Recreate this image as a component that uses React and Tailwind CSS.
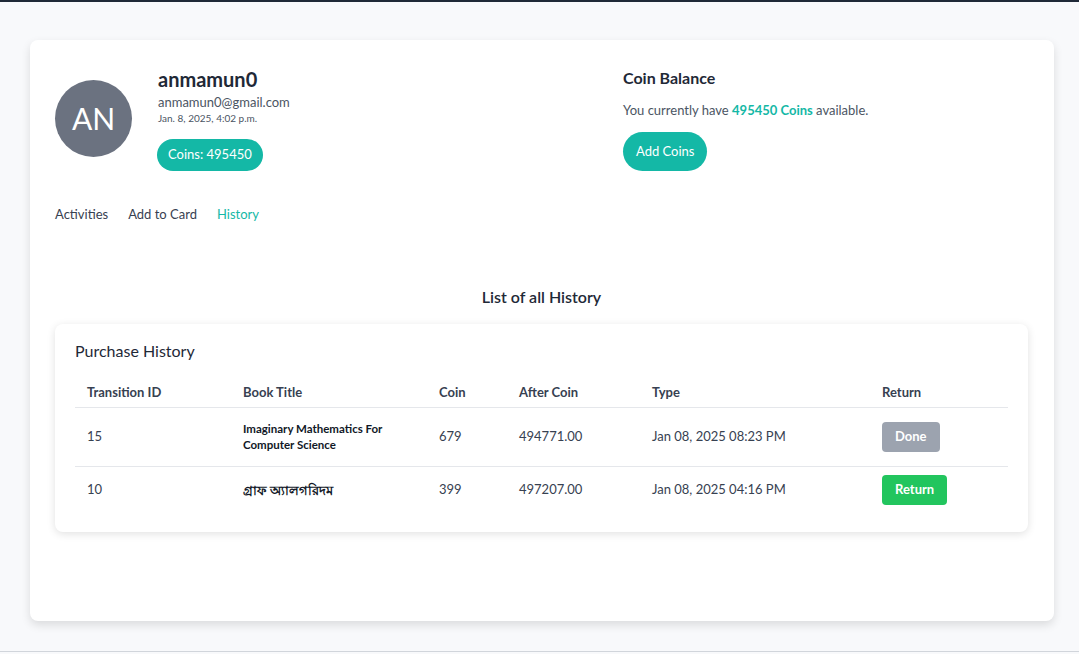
const rows = [
  {
    id: "15",
    title: "Imaginary Mathematics For Computer Science",
    coin: "679",
    after: "494771.00",
    type: "Jan 08, 2025 08:23 PM",
    done: true,
  },
  {
    id: "10",
    title: "গ্রাফ অ্যালগরিদম",
    coin: "399",
    after: "497207.00",
    type: "Jan 08, 2025 04:16 PM",
    done: false,
  },
];

const App = () => {
  return (
    <div
      className="h-[654px] bg-[#f8f9fb] border-t-2 border-[#1f2937] flex flex-col"
      style={{ fontFamily: "Lato, 'Open Sans', sans-serif" }}
    >
      <div className="pt-[38px] pl-[30px] pr-[25px]">
        <div className="bg-white rounded-lg shadow-[0_4px_10px_rgba(0,0,0,0.12)] h-[581px] pt-[26px] pl-[25px] pr-[26px]">
          {/* Profile + balance */}
          <div className="flex">
            <div className="flex w-[568px]">
              <div className="mt-[14px] w-[77px] h-[77px] rounded-full bg-[#6b7280] flex items-center justify-center text-white text-[30px]">
                AN
              </div>
              <div className="ml-[26px]">
                <h1 className="text-[20px] font-bold text-[#1f2937] leading-[26px]">anmamun0</h1>
                <p className="text-[13px] text-[#4b5563] leading-[18px] mt-[1px]">anmamun0@gmail.com</p>
                <p className="text-[10px] text-[#4b5563] leading-[14px]">Jan. 8, 2025, 4:02 p.m.</p>
                <div className="mt-[14px] -ml-[1px] inline-flex items-center h-[32px] px-[11px] rounded-full bg-[#14b8a6] text-white text-[13px]">
                  Coins: 495450
                </div>
              </div>
            </div>
            <div className="pt-[1px]">
              <h2 className="text-[16px] font-bold text-[#1f2937] leading-[22px]">Coin Balance</h2>
              <p className="text-[13px] text-[#4b5563] mt-[12px] leading-[18px]">
                You currently have <span className="font-bold text-[#14b8a6]">495450 Coins</span> available.
              </p>
              <button className="mt-[13px] h-[39px] px-[13px] rounded-full bg-[#14b8a6] text-white text-[13px]">
                Add Coins
              </button>
            </div>
          </div>

          {/* Tabs */}
          <div className="flex gap-[20px] mt-[34px] text-[13px] text-[#374151]">
            <span>Activities</span>
            <span>Add to Card</span>
            <span className="text-[#14b8a6]">History</span>
          </div>

          <h3 className="text-center text-[16px] font-semibold text-[#1f2937] mt-[60px]">List of all History</h3>

          {/* Purchase history card */}
          <div className="mt-[15px] bg-white rounded-lg shadow-[0_2px_8px_rgba(0,0,0,0.12)] pt-[15px] pb-[19px] px-[20px]">
            <h4 className="text-[16px] text-[#1f2937] leading-[24px]">Purchase History</h4>
            <table className="mt-[15px] w-full table-fixed text-[13px] text-[#374151]">
              <colgroup>
                <col className="w-[156px]" />
                <col className="w-[196px]" />
                <col className="w-[80px]" />
                <col className="w-[133px]" />
                <col className="w-[230px]" />
                <col />
              </colgroup>
              <thead>
                <tr className="border-b border-[#e5e7eb] text-left">
                  <th className="px-3 h-[30px] font-bold">Transition ID</th>
                  <th className="px-3 font-bold">Book Title</th>
                  <th className="px-3 font-bold">Coin</th>
                  <th className="px-3 font-bold">After Coin</th>
                  <th className="px-3 font-bold">Type</th>
                  <th className="px-3 font-bold">Return</th>
                </tr>
              </thead>
              <tbody>
                {rows.map((r, i) => (
                  <tr key={r.id} className={i === 0 ? "border-b border-[#e5e7eb]" : ""}>
                    <td className={i === 0 ? "px-3 h-[59px]" : "px-3 h-[46px]"}>{r.id}</td>
                    <td
                      className={
                        i === 0
                          ? "px-3 font-bold text-[11.5px] leading-[16px] text-[#111827]"
                          : "px-3 font-bold text-[13px] leading-[18px] text-[#111827]"
                      }
                    >
                      {r.title}
                    </td>
                    <td className="px-3">{r.coin}</td>
                    <td className="px-3">{r.after}</td>
                    <td className="px-3">{r.type}</td>
                    <td className="px-3">
                      {r.done ? (
                        <span className="inline-flex items-center h-[30px] px-[13px] rounded bg-[#9ca3af] text-white font-bold">
                          Done
                        </span>
                      ) : (
                        <span className="inline-flex items-center h-[30px] px-[13px] rounded bg-[#22c55e] text-white font-bold">
                          Return
                        </span>
                      )}
                    </td>
                  </tr>
                ))}
              </tbody>
            </table>
          </div>
        </div>
      </div>
      <div className="mt-auto mb-[2px] border-b border-[#d1d5db]" />
    </div>
  );
};

export default App;
